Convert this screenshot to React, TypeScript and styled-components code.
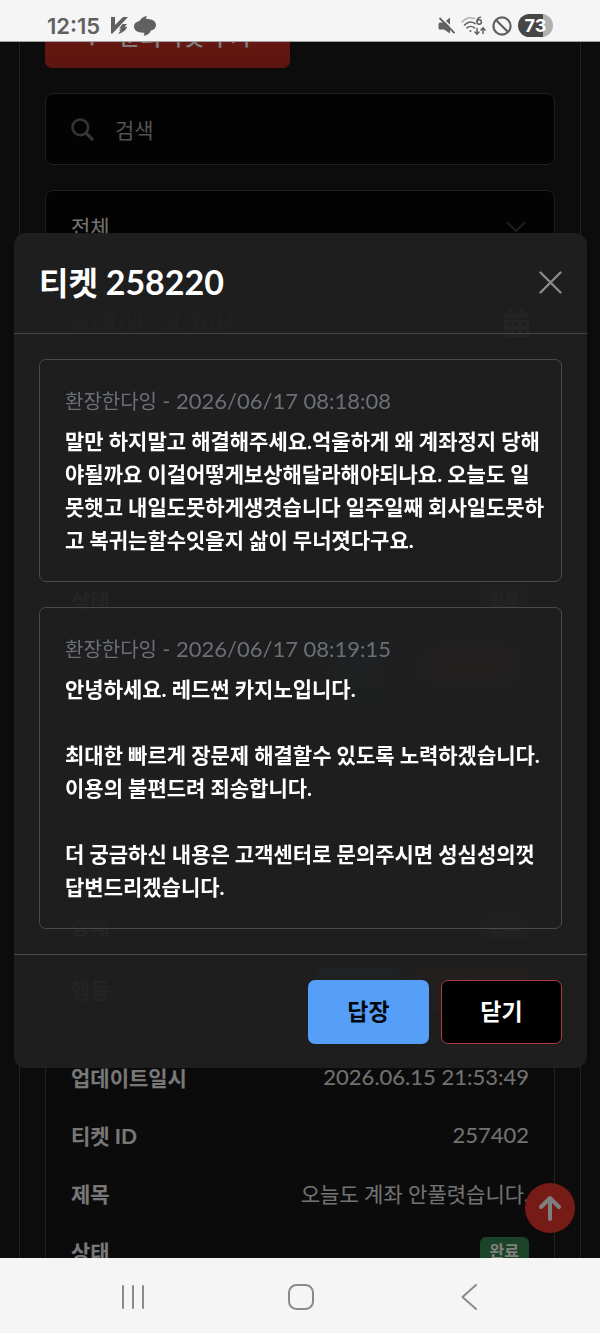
import React from "react";
import styled, { createGlobalStyle } from "styled-components";

const GlobalStyle = createGlobalStyle`
  *, *::before, *::after { box-sizing: border-box; }
  body {
    margin: 0;
    background: #181818;
    color: #fff;
    font-family: Lato, "Noto Sans CJK KR", sans-serif;
    font-size: 21px;
    line-height: 33px;
  }
  button, input, select { font: inherit; }
`;

const Phone = styled.div`
  display: flex;
  flex-direction: column;
  height: 100vh;
`;

/* ---------- system bars ---------- */

const StatusBar = styled.header`
  flex: none;
  display: flex;
  align-items: center;
  justify-content: space-between;
  height: 42px;
  padding: 10px 47px 0;
  background: #f5f5f5;
  border-bottom: 1px solid #a0a0a0;
  color: #606060;
`;

const StatusGroup = styled.div`
  display: flex;
  align-items: center;
  gap: 6px;
`;

const Clock = styled.span`
  margin-right: 5px;
  font-family: Inter, sans-serif;
  font-size: 22px;
  font-weight: 600;
  line-height: 24px;
`;

const Battery = styled.span`
  width: 35px;
  height: 23px;
  border-radius: 12px;
  background: linear-gradient(90deg, #464646 72%, #b0b0b0 72%);
  color: #fff;
  font-family: Inter, sans-serif;
  font-size: 18px;
  font-weight: 700;
  line-height: 23px;
  text-align: center;
`;

const NavBar = styled.nav`
  flex: none;
  display: grid;
  grid-template-columns: repeat(3, 1fr);
  height: 75px;
  padding: 0 48px;
  background: #f5f5f5;
`;

const NavButton = styled.button`
  display: flex;
  align-items: center;
  justify-content: center;
  padding: 3px 0 0 2px;
  border: 0;
  background: none;
  color: #8a8a8a;
`;

/* ---------- page behind the dialog ---------- */

const Screen = styled.main`
  position: relative;
  flex: 1;
  min-height: 0;
  overflow: hidden;
`;

const Page = styled.section`
  display: flex;
  flex-direction: column;
  align-items: stretch;
  gap: 25px;
  margin: -38px 19px 0;
  padding: 0 25px 25px;
  border: 1px solid #454545;
  border-top: 0;
`;

const Button = styled.button<{ $tone: "red" | "blue" | "dark" }>`
  display: inline-flex;
  align-items: center;
  justify-content: center;
  gap: 18px;
  min-width: 121px;
  height: 64px;
  padding: 0 38px;
  border-radius: 7px;
  font-size: 23px;
  font-weight: ${(p) => (p.$tone === "red" ? 500 : 700)};
  color: ${(p) => (p.$tone === "blue" ? "#05080d" : "#fff")};
  border: ${(p) => (p.$tone === "dark" ? "1px solid #a83c40" : "0")};
  background: ${(p) =>
    p.$tone === "red"
      ? "linear-gradient(#e8382c, #b82a1e)"
      : p.$tone === "blue"
        ? "#559ff9"
        : "#000"};
`;

const AddButton = styled(Button)`
  align-self: flex-start;
`;

const Field = styled.label`
  display: flex;
  align-items: center;
  gap: 21px;
  height: 72px;
  padding: 0 25px;
  border: 1px solid #3e3e3e;
  border-radius: 8px;
  background: #060606;
`;

const TextInput = styled.input`
  flex: 1;
  min-width: 0;
  padding: 0;
  border: 0;
  outline: 0;
  background: none;
  color: #e8e8e8;
  &::placeholder { color: #a4a4a4; opacity: 1; }
`;

const DateInput = styled(TextInput)`
  font-size: 20px;
`;

const SelectInput = styled.select`
  flex: 1;
  min-width: 0;
  padding: 0;
  border: 0;
  outline: 0;
  appearance: none;
  background: none;
  color: #e8e8e8;
`;

const Ticket = styled.dl`
  margin: 0;
  padding: 12px 25px 10px;
  border: 1px solid #454545;
  border-top: 0;
  border-bottom-color: #262626;
  background: #161616;
`;

const TicketRow = styled.div<{ $tall?: boolean }>`
  display: flex;
  align-items: center;
  justify-content: space-between;
  height: ${(p) => (p.$tall ? 71 : 58)}px;
  white-space: nowrap;
`;

const Term = styled.dt`
  color: #f0f0f0;
  font-weight: 700;
`;

const Value = styled.dd`
  display: flex;
  gap: 12px;
  margin: 0;
  color: #e4e4e4;
`;

const Digits = styled.span`
  font-size: 22px;
  line-height: 24px;
`;

const Badge = styled.span`
  padding: 0 10px;
  border-radius: 6px;
  background: #37864f;
  color: #fff;
  font-size: 16px;
  font-weight: 700;
  line-height: 28px;
`;

const RowAction = styled.button<{ $danger?: boolean }>`
  display: flex;
  align-items: center;
  justify-content: center;
  width: ${(p) => (p.$danger ? 116 : 85)}px;
  height: 44px;
  border: 0;
  border-radius: 7px;
  background: ${(p) => (p.$danger ? "#c8362c" : "#3f7fb4")};
  color: #fff;
`;

const ScrollTop = styled.button`
  position: absolute;
  right: 25px;
  bottom: 25px;
  display: flex;
  align-items: center;
  justify-content: center;
  width: 50px;
  height: 50px;
  padding: 0;
  border: 0;
  border-radius: 50%;
  background: #ee362e;
  color: #fff;
`;

/* ---------- dialog ---------- */

const Overlay = styled.div`
  position: absolute;
  inset: 0;
  display: flex;
  align-items: center;
  padding: 0 13px 0 14px;
  overflow: auto;
  background: rgba(0, 0, 0, 0.5);
`;

const Dialog = styled.section`
  width: 100%;
  margin: auto 0;
  border-radius: 12px;
  background: rgba(32, 32, 32, 0.95);
`;

const DialogHeader = styled.header`
  display: flex;
  align-items: center;
  justify-content: space-between;
  height: 101px;
  padding: 0 25px;
  border-bottom: 1px solid #444;
`;

const DialogTitle = styled.h2`
  margin: 0;
  font-size: 32px;
  font-weight: 700;
  line-height: 40px;
`;

const TitleNumber = styled.span`
  font-size: 34px;
`;

const CloseIcon = styled.button`
  display: flex;
  padding: 0;
  border: 0;
  background: none;
  color: #8a8a8a;
`;

const DialogBody = styled.div`
  display: flex;
  flex-direction: column;
  gap: 25px;
  padding: 25px;
`;

const Message = styled.article`
  padding: 25px;
  border: 1px solid #4a4a4a;
  border-radius: 7px;
  backdrop-filter: blur(20px);
`;

const MessageMeta = styled.p`
  margin: 0 0 6px;
  color: #6b6f77;
  font-size: 20px;
`;

const MessageText = styled.p`
  margin: 0;
  font-weight: 700;
  white-space: pre;
`;

const DialogFooter = styled.footer`
  display: flex;
  justify-content: flex-end;
  gap: 12px;
  padding: 25px 25px 24px;
  border-top: 1px solid #4a4a4a;
`;

/* ---------- icons ---------- */

const PlusIcon = () => (
  <svg width="18" height="20" viewBox="0 0 18 20" stroke="currentColor" strokeWidth="3" strokeLinecap="round">
    <path d="M9 2v16M1.5 10h15" />
  </svg>
);

const SearchIcon = () => (
  <svg width="23" height="23" viewBox="0 0 23 23" fill="none" stroke="#666b74" strokeLinecap="round">
    <circle cx="9.3" cy="9.3" r="7.8" strokeWidth="2.6" />
    <path d="M15.5 15.5l5.6 5.6" strokeWidth="3.2" />
  </svg>
);

const ChevronIcon = () => (
  <svg width="26" height="18" viewBox="0 0 26 18" fill="none" stroke="#343a40" strokeWidth="2.2" strokeLinecap="round" strokeLinejoin="round">
    <path d="M5 6l8 8 8-8" />
  </svg>
);

const CalendarIcon = () => (
  <svg width="25" height="28" viewBox="0 0 25 28" fill="#fff">
    <path d="M5 1.5a1.8 1.8 0 0 1 3.6 0V4h7.8V1.5a1.8 1.8 0 0 1 3.6 0V4h2.5A2.5 2.5 0 0 1 25 6.5V9H0V6.5A2.5 2.5 0 0 1 2.5 4H5z" />
    <path
      fillRule="evenodd"
      d="M0 10.5h25v15A2.5 2.5 0 0 1 22.5 28h-20A2.5 2.5 0 0 1 0 25.5zM4 14v3h3v-3zm7 0v3h3v-3zm7 0v3h3v-3zM4 21v3h3v-3zm7 0v3h3v-3zm7 0v3h3v-3z"
    />
  </svg>
);

const TrashIcon = () => (
  <svg width="20" height="22" viewBox="0 0 20 22" fill="none" stroke="currentColor" strokeWidth="2">
    <path d="M1 4h18M7 4V1.5h6V4M3 4l1 17h12l1-17M7.5 8v9M12.5 8v9" />
  </svg>
);

const ArrowUpIcon = () => (
  <svg width="24" height="27" viewBox="0 0 24 27" fill="none" stroke="currentColor" strokeWidth="4" strokeLinecap="round" strokeLinejoin="round">
    <path d="M12 24V3M3 12l9-9 9 9" />
  </svg>
);

const XIcon = () => (
  <svg width="23" height="23" viewBox="0 0 23 23" fill="none" stroke="currentColor" strokeWidth="2.4" strokeLinecap="round">
    <path d="M1.5 1.5l20 20M21.5 1.5l-20 20" />
  </svg>
);

const BoltMarkIcon = () => (
  <svg width="17" height="17" viewBox="0 0 17 17" fill="currentColor">
    <path d="M0 0h4v8L12 0h5L1.5 16.5H0z" />
    <path d="M11.5 7H16l-2.400 2.700h2.400c-.8 3.400-4 5.800-9 7.300l2.600-3.200H7.800l2.600-2.400H8.200z" />
  </svg>
);

const SwirlIcon = () => (
  <svg width="22" height="20" viewBox="0 0 22 20" fill="currentColor">
    <path d="M13 0C12 1.5 12 2.3 12.5 3 18 3 22 5 22 9c0 3.5-3 5-5 5.5-1 3-4 5-7.5 5.5 1-1.5 1-2.5.5-3.300C4 17 0 14.500 0 10.500 0 7.500 2.500 5.500 5.500 5 7 2 10 .5 13 0z" />
  </svg>
);

const MuteIcon = () => (
  <svg width="17" height="17" viewBox="0 0 17 17">
    <path d="M1.5 5.5H6L12 .5v16L6 12.500H2A1.500 1.500 0 0 1 .5 11V7z" fill="#606060" />
    <path d="M3 0l14 14" stroke="#f5f5f5" strokeWidth="1.6" />
    <path d="M1.5 1l15 15" stroke="#606060" strokeWidth="1.8" />
  </svg>
);

const WifiIcon = () => (
  <svg width="25" height="20" viewBox="0 0 25 20" fill="none" stroke="#606060" strokeWidth="1.6" strokeLinecap="round">
    <path d="M1 6C4.5 2.2 9 1 13.5 2.6" stroke="#b8b8b8" />
    <path d="M3.5 9c3-3 7-3.8 10.5-1.5" />
    <path d="M6 11.8c2-1.800 5.200-1.800 7.500 0" />
    <circle cx="9.5" cy="15" r="1" fill="#606060" stroke="none" />
    <path d="M19.5 1.2C17 1.5 16 3.5 16 5.8" strokeWidth="1.5" />
    <circle cx="18.2" cy="6" r="2.2" strokeWidth="1.5" />
    <path d="M16 12.5V18m-2-2l2 2.200 2-2.200M22 17.500V12m-2 2l2-2.200 2 2.200" strokeWidth="1.5" />
  </svg>
);

const BlockIcon = () => (
  <svg width="20" height="20" viewBox="0 0 20 20" fill="none" stroke="#606060" strokeWidth="2.2">
    <circle cx="10" cy="10" r="8.6" />
    <path d="M4 4l12 12" />
  </svg>
);

const RecentsIcon = () => (
  <svg width="24" height="24" viewBox="0 0 24 24" stroke="currentColor" strokeWidth="2" strokeLinecap="round">
    <path d="M2 1v22M12 1v22M22 1v22" />
  </svg>
);

const HomeIcon = () => (
  <svg width="26" height="26" viewBox="0 0 26 26" fill="none" stroke="currentColor" strokeWidth="2">
    <rect x="1" y="1" width="24" height="24" rx="7.5" />
  </svg>
);

const BackIcon = () => (
  <svg width="17" height="26" viewBox="0 0 17 26" fill="none" stroke="currentColor" strokeWidth="2" strokeLinecap="round" strokeLinejoin="round">
    <path d="M15 1L1.5 13 15 25" />
  </svg>
);

/* ---------- data ---------- */

type TicketData = { updated?: string; id?: string; title?: string };

const tickets: TicketData[] = [
  {},
  {},
  { updated: "2026.06.15 21:53:49", id: "257402", title: "오늘도 계좌 안풀렷습니다." },
];

const messages = [
  {
    author: "환장한다잉",
    date: "2026/06/17 08:18:08",
    text:
      "말만 하지말고 해결해주세요.억울하게 왜 계좌정지 당해\n" +
      "야될까요 이걸어떻게보상해달라해야되나요. 오늘도 일\n" +
      "못햇고 내일도못하게생겻습니다 일주일째 회사일도못하\n" +
      "고 복귀는할수잇을지 삶이 무너졋다구요.",
  },
  {
    author: "환장한다잉",
    date: "2026/06/17 08:19:15",
    text:
      "안녕하세요. 레드썬 카지노입니다.\n\n" +
      "최대한 빠르게 장문제 해결할수 있도록 노력하겠습니다.\n" +
      "이용의 불편드려 죄송합니다.\n\n" +
      "더 궁금하신 내용은 고객센터로 문의주시면 성심성의껏\n" +
      "답변드리겠습니다.",
  },
];

const TicketCard = ({ updated, id, title }: TicketData) => (
  <Ticket>
    <TicketRow>
      <Term>업데이트일시</Term>
      <Value><Digits>{updated}</Digits></Value>
    </TicketRow>
    <TicketRow>
      <Term>티켓 ID</Term>
      <Value><Digits>{id}</Digits></Value>
    </TicketRow>
    <TicketRow>
      <Term>제목</Term>
      <Value>{title}</Value>
    </TicketRow>
    <TicketRow>
      <Term>상태</Term>
      <Value><Badge>완료</Badge></Value>
    </TicketRow>
    <TicketRow $tall>
      <Term>행동</Term>
      <Value>
        <RowAction aria-label="보기" />
        <RowAction $danger aria-label="삭제"><TrashIcon /></RowAction>
      </Value>
    </TicketRow>
  </Ticket>
);

export default function App() {
  return (
    <Phone>
      <GlobalStyle />
      <StatusBar>
        <StatusGroup>
          <Clock>12:15</Clock>
          <BoltMarkIcon />
          <SwirlIcon />
        </StatusGroup>
        <StatusGroup>
          <MuteIcon />
          <WifiIcon />
          <BlockIcon />
          <Battery>73</Battery>
        </StatusGroup>
      </StatusBar>

      <Screen>
        <Page>
          <AddButton $tone="red"><PlusIcon />문의티켓 추가</AddButton>
          <Field>
            <SearchIcon />
            <TextInput type="search" placeholder="검색" aria-label="검색" />
          </Field>
          <Field>
            <SelectInput aria-label="상태" defaultValue="all">
              <option value="all">전체</option>
            </SelectInput>
            <ChevronIcon />
          </Field>
          <Field>
            <DateInput type="text" placeholder="일/월/년 - 일/월/년" aria-label="기간" />
            <CalendarIcon />
          </Field>
          <div>
            {tickets.map((ticket, i) => <TicketCard key={i} {...ticket} />)}
          </div>
        </Page>
        <ScrollTop aria-label="맨 위로"><ArrowUpIcon /></ScrollTop>

        <Overlay>
          <Dialog role="dialog" aria-modal="true" aria-labelledby="ticket-title">
            <DialogHeader>
              <DialogTitle id="ticket-title">티켓 <TitleNumber>258220</TitleNumber></DialogTitle>
              <CloseIcon aria-label="닫기"><XIcon /></CloseIcon>
            </DialogHeader>
            <DialogBody>
              {messages.map((m) => (
                <Message key={m.date}>
                  <MessageMeta>{m.author} <Digits>- {m.date}</Digits></MessageMeta>
                  <MessageText>{m.text}</MessageText>
                </Message>
              ))}
            </DialogBody>
            <DialogFooter>
              <Button $tone="blue">답장</Button>
              <Button $tone="dark">닫기</Button>
            </DialogFooter>
          </Dialog>
        </Overlay>
      </Screen>

      <NavBar aria-label="시스템">
        <NavButton aria-label="최근 앱"><RecentsIcon /></NavButton>
        <NavButton aria-label="홈"><HomeIcon /></NavButton>
        <NavButton aria-label="뒤로"><BackIcon /></NavButton>
      </NavBar>
    </Phone>
  );
}
